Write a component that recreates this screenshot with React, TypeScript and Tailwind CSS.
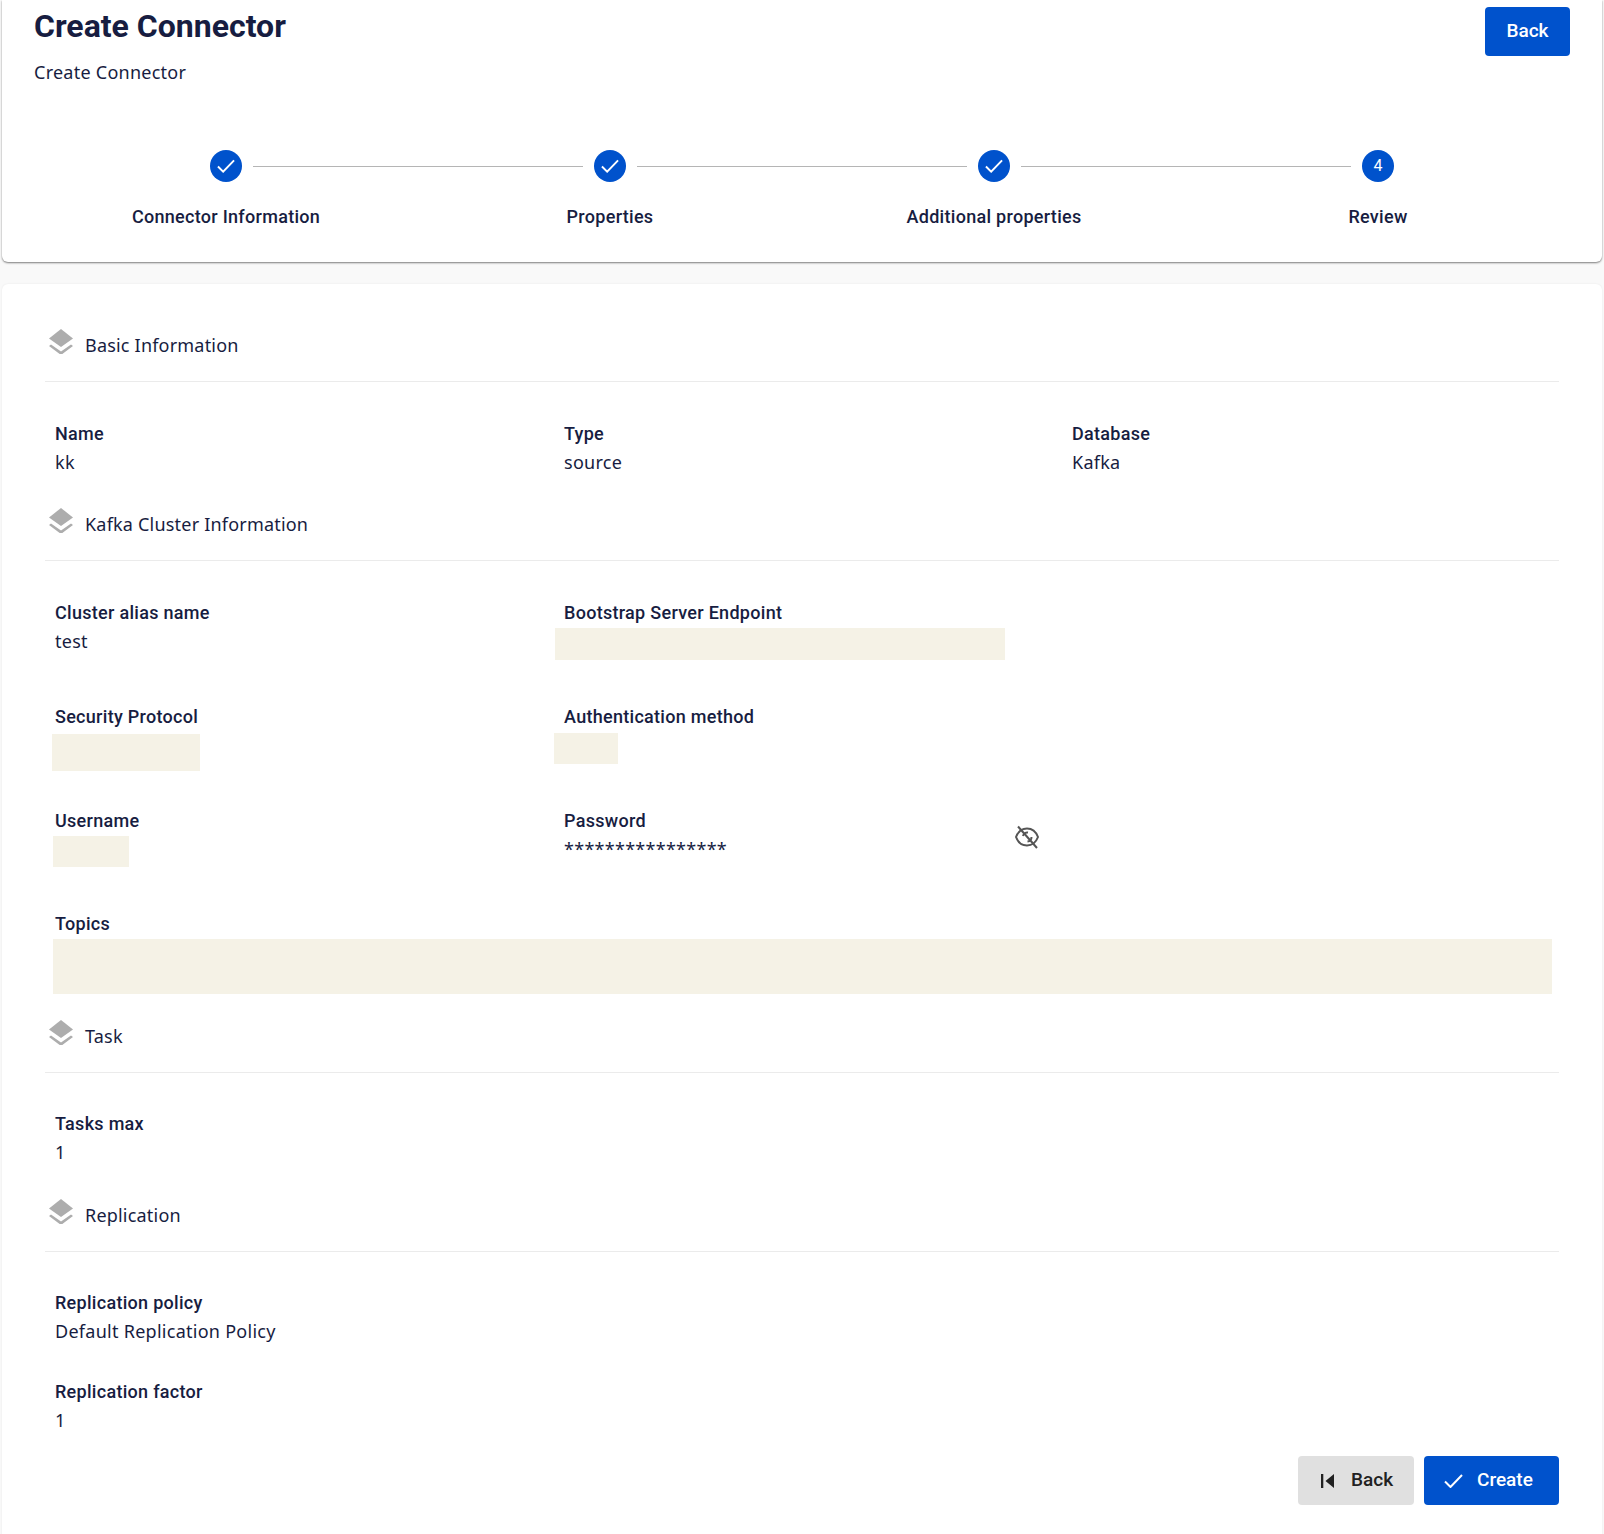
const navy = "text-[#171d41]";
const labelText = `text-[18px] tracking-[0.29px] leading-[28px] font-medium font-['Roboto'] ${navy}`;
const valueText = `text-[18px] tracking-[0.27px] leading-[28px] font-['Noto_Sans'] ${navy}`;

function Check({ w = 18, h = 14 }: { w?: number; h?: number }) {
  return (
    <svg width={w} height={h} viewBox="0 0 19 14" fill="none" stroke="currentColor" strokeWidth="2">
      <path d="M1 7.5l5.5 5.5L18 1" />
    </svg>
  );
}

function Step({ label, done, num, first, last }: { label: string; done?: boolean; num?: number; first?: boolean; last?: boolean }) {
  return (
    <div className="flex flex-col items-center">
      <div className="flex items-center w-full h-8 gap-[11px]">
        <div className={first ? "flex-1" : "flex-1 h-px bg-[#b5b5b5]"} />
        <div className="w-8 h-8 rounded-full bg-[#0052cc] text-white flex items-center justify-center text-[16px] font-['Roboto']">
          {done ? <Check /> : num}
        </div>
        <div className={last ? "flex-1" : "flex-1 h-px bg-[#b5b5b5]"} />
      </div>
      <div className={`mt-[21px] leading-[27px] ${labelText}`}>{label}</div>
    </div>
  );
}

function SectionHead({ title, className }: { title: string; className?: string }) {
  return (
    <div className={`flex items-center h-[61px] pb-[11px] ml-[-10px] mr-[-10px] border-b border-[#ebebeb] ${className ?? ""}`}>
      <svg width="26" height="26" viewBox="0 0 26 26" className="ml-[3px] mb-[10px]" fill="#adadad">
        <path d="M13 1L25 10.5L13 19L1 10.5Z" />
        <path d="M3 16.5L1 18L13 27L25 18L23 16.5L13 23.5Z" />
      </svg>
      <span className={`ml-[11px] text-[18px] tracking-[0.2px] font-['Noto_Sans'] ${navy}`}>{title}</span>
    </div>
  );
}

function Field({ label, value }: { label: string; value: string }) {
  return (
    <div>
      <div className={labelText}>{label}</div>
      <div className={valueText}>{value}</div>
    </div>
  );
}

function EyeOffIcon() {
  return (
    <svg width="26" height="26" viewBox="0 0 26 26" fill="none" stroke="#555555" strokeWidth="2" className="mt-[17px]">
      <path d="M2 13C4.500 6.500 9 4.500 13 4.500s8.500 2 11 8.500c-2.500 6.500-7 8.500-11 8.500S4.500 19.500 2 13Z" />
      <path d="M9 12a4.500 4.500 0 0 1 5-3.500M17.500 13a4.500 4.500 0 0 1-4 4.500" />
      <path d="M4 2.500L23 24" />
    </svg>
  );
}

export default function App() {
  return (
    <div className="w-[1604px] h-[1534px] bg-[#f9f9f9] overflow-hidden px-[2px]">
      <div className="h-[262px] bg-white rounded-b-[6px] shadow-[0_1px_2px_rgba(0,0,0,0.5)] px-[32px]">
        <div className="flex justify-between">
          <div>
            <h1 className={`mt-[7px] text-[32px] leading-[38px] font-bold font-['Roboto'] ${navy}`}>Create Connector</h1>
            <p className={`mt-[13px] text-[18px] tracking-[0.25px] leading-[28px] font-['Noto_Sans'] ${navy}`}>Create Connector</p>
          </div>
          <button className="mt-[7px] w-[85px] h-[49px] rounded-[4px] bg-[#0052cc] text-white text-[19px] font-medium font-['Roboto']">Back</button>
        </div>
        <div className="grid grid-cols-4 w-[1536px] mt-[64px]">
          <Step label="Connector Information" done first />
          <Step label="Properties" done />
          <Step label="Additional properties" done />
          <Step label="Review" num={4} last />
        </div>
      </div>

      <div className="mt-[22px] bg-white rounded-t-[6px] h-[1300px] px-[53px] pt-[37px] shadow-[0_0_2px_rgba(0,0,0,0.08)]">
        <SectionHead title="Basic Information" />
        <div className="grid grid-cols-[509px_508px_1fr] mt-[38px]">
          <Field label="Name" value="kk" />
          <Field label="Type" value="source" />
          <Field label="Database" value="Kafka" />
        </div>

        <SectionHead title="Kafka Cluster Information" className="mt-[24px]" />
        <div className="grid grid-cols-[509px_1fr] mt-[38px]">
          <Field label="Cluster alias name" value="test" />
          <div>
            <div className={labelText}>Bootstrap Server Endpoint</div>
            <div className="mt-[1px] ml-[-9px] w-[450px] h-[32px] bg-[#f5f2e6]" />
          </div>
        </div>
        <div className="grid grid-cols-[509px_1fr] mt-[43px]">
          <div>
            <div className={labelText}>Security Protocol</div>
            <div className="mt-[3px] ml-[-3px] w-[148px] h-[37px] bg-[#f5f2e6]" />
          </div>
          <div>
            <div className={labelText}>Authentication method</div>
            <div className="mt-[2px] ml-[-10px] w-[64px] h-[31px] bg-[#f5f2e6]" />
          </div>
        </div>
        <div className="grid grid-cols-[509px_1fr] mt-[36px]">
          <div>
            <div className={labelText}>Username</div>
            <div className="mt-[1px] ml-[-2px] w-[76px] h-[31px] bg-[#f5f2e6]" />
          </div>
          <div className="flex">
            <div className="w-[450px]">
              <div className={labelText}>Password</div>
              <div className={`leading-[24px] ${valueText}`}>****************</div>
            </div>
            <EyeOffIcon />
          </div>
        </div>
        <div className="mt-[43px]">
          <div className={labelText}>Topics</div>
          <div className="mt-[1px] ml-[-2px] w-[1499px] h-[55px] bg-[#f5f2e6]" />
        </div>

        <SectionHead title="Task" className="mt-[18px]" />
        <div className="mt-[37px]">
          <Field label="Tasks max" value="1" />
        </div>

        <SectionHead title="Replication" className="mt-[25px]" />
        <div className="mt-[37px]">
          <Field label="Replication policy" value="Default Replication Policy" />
        </div>
        <div className="mt-[33px]">
          <Field label="Replication factor" value="1" />
        </div>

        <div className="flex justify-end gap-[10px] mt-[22px] mr-[-10px]">
          <button className="flex items-center w-[116px] h-[49px] rounded-[4px] bg-[#e0e0e0] text-[#212121] text-[19px] font-medium font-['Roboto'] pl-[23px]">
            <svg width="13" height="14" viewBox="0 0 13 14" fill="currentColor" className="mr-[17px]">
              <path d="M0 0h2.300v14H0zM4.500 7L13 0v14z" />
            </svg>
            Back
          </button>
          <button className="flex items-center w-[135px] h-[49px] rounded-[4px] bg-[#0052cc] text-white text-[19px] font-medium font-['Roboto'] pl-[20px]">
            <span className="mr-[14px]"><Check w={19} h={14} /></span>
            Create
          </button>
        </div>
      </div>
    </div>
  );
}
